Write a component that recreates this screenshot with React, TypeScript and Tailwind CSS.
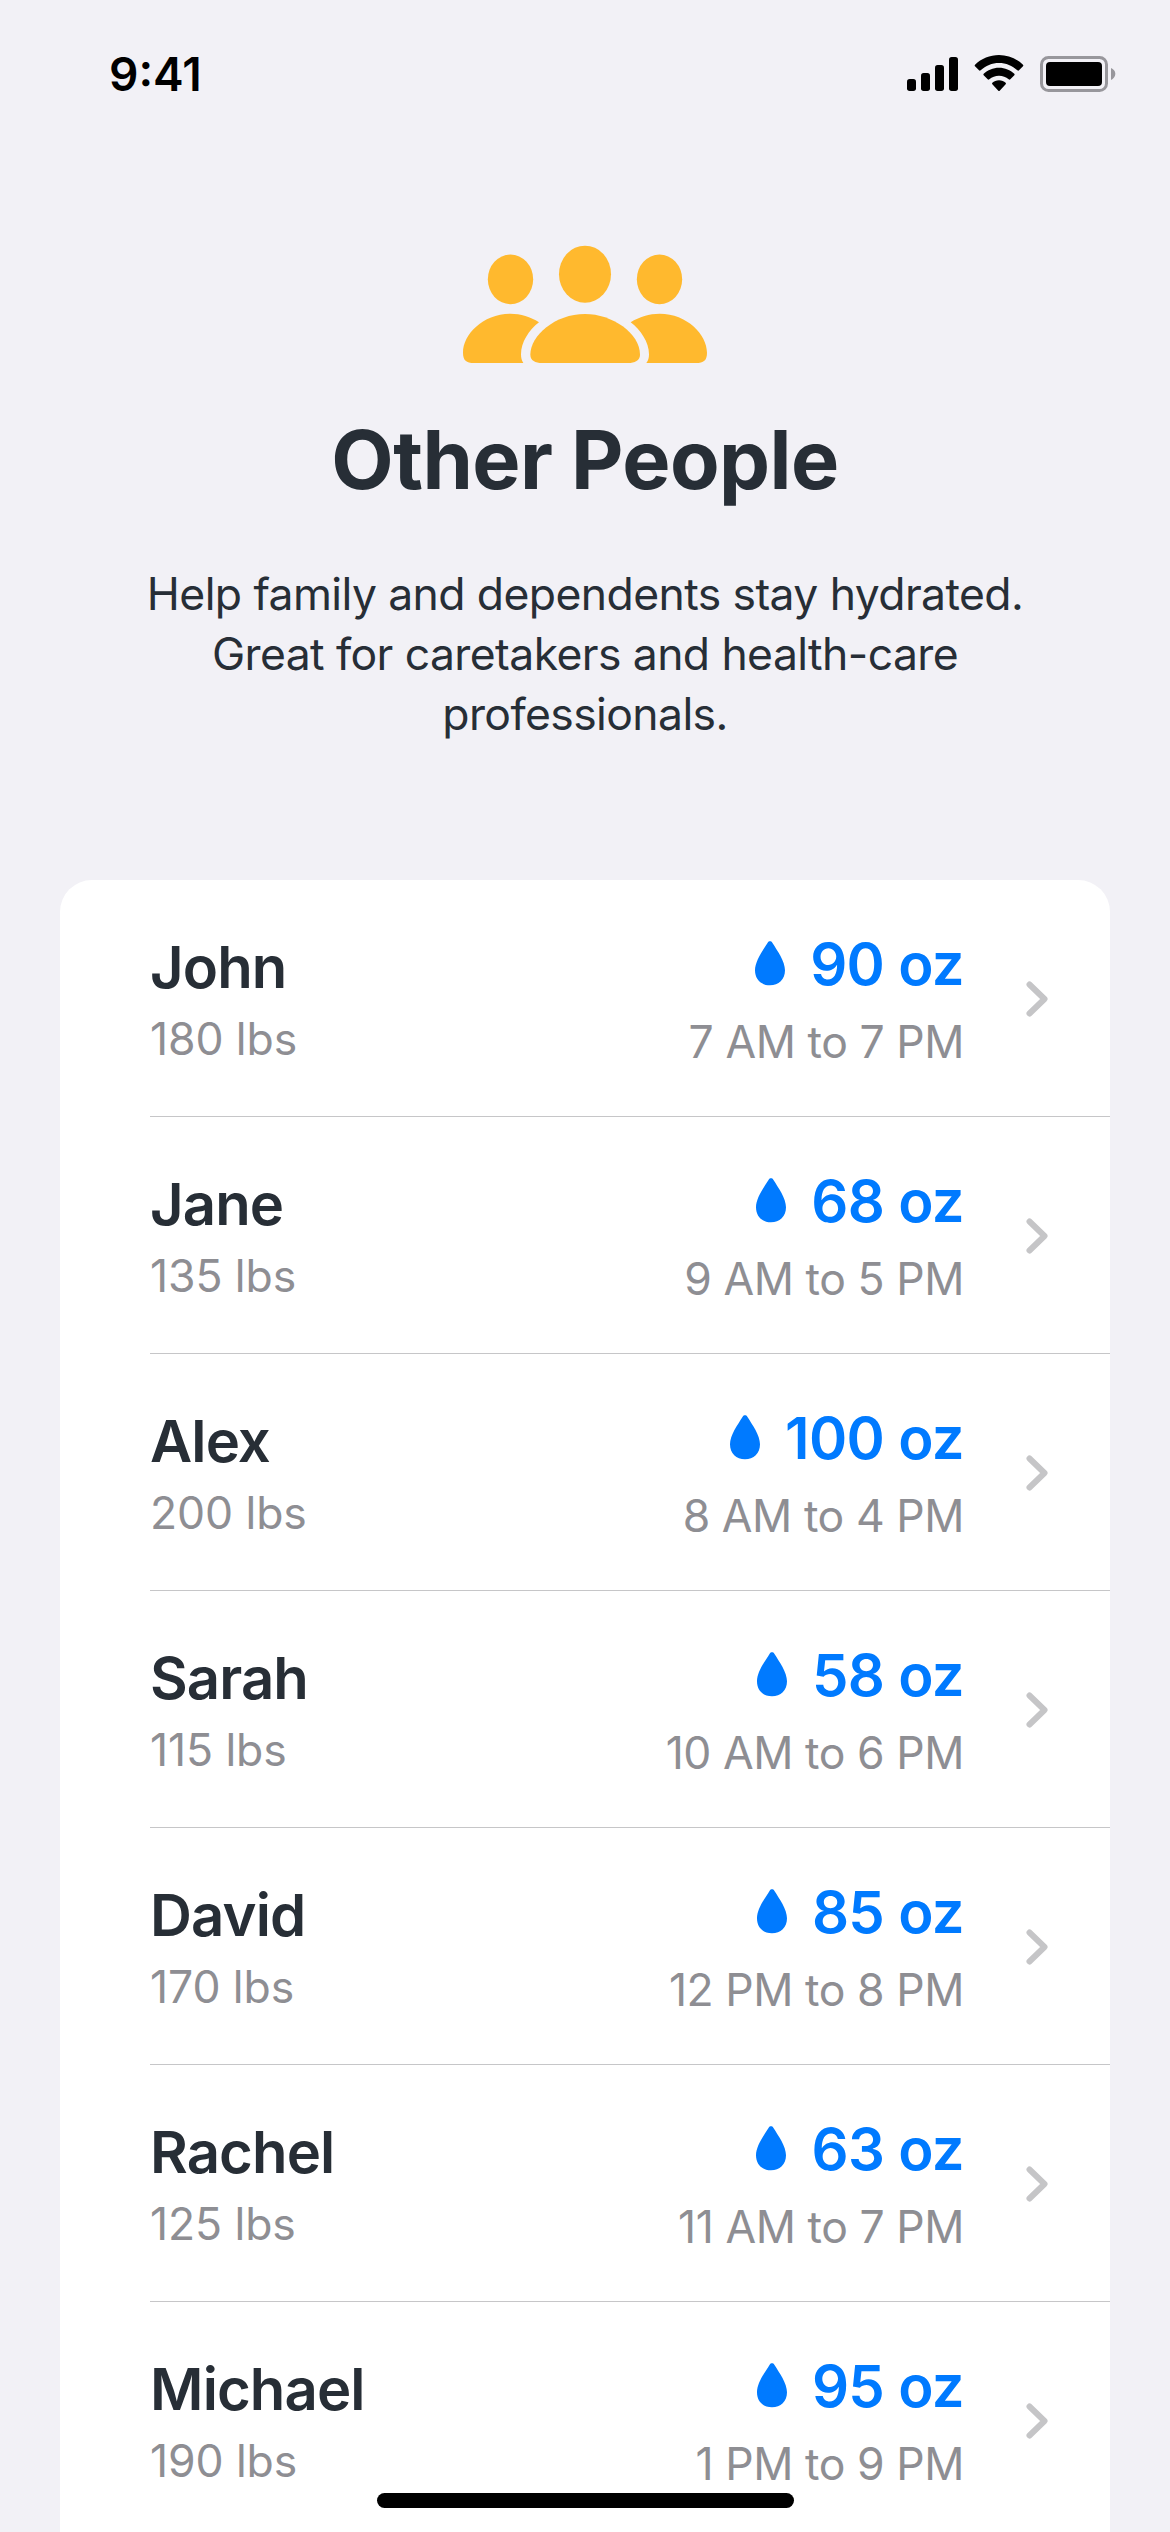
import React from 'react';

interface Person {
  name: string;
  weight: string;
  amount: string;
  hours: string;
}

const PEOPLE: Person[] = [
  { name: 'John', weight: '180 lbs', amount: '90 oz', hours: '7 AM to 7 PM' },
  { name: 'Jane', weight: '135 lbs', amount: '68 oz', hours: '9 AM to 5 PM' },
  { name: 'Alex', weight: '200 lbs', amount: '100 oz', hours: '8 AM to 4 PM' },
  { name: 'Sarah', weight: '115 lbs', amount: '58 oz', hours: '10 AM to 6 PM' },
  { name: 'David', weight: '170 lbs', amount: '85 oz', hours: '12 PM to 8 PM' },
  { name: 'Rachel', weight: '125 lbs', amount: '63 oz', hours: '11 AM to 7 PM' },
  { name: 'Michael', weight: '190 lbs', amount: '95 oz', hours: '1 PM to 9 PM' },
];

const PeopleIcon = () => (
  <svg className="h-[119px] w-[246px]" viewBox="66 45 738 357" fill="#ffb92e">
    <ellipse cx="435" cy="132.500" rx="78" ry="85.500" />
    <ellipse cx="211.500" cy="148" rx="68" ry="74.500" />
    <ellipse cx="658.500" cy="148" rx="68" ry="74.500" />
    <path d="M435 252C517 252 600 310 600 374C600 391 584 399 564 399H306C286 399 271 391 271 374C271 317 345 252 435 252Z" />
    <path d="M211 251.500C242 251.500 272 261 297 277C267 300 243 337 243 373C243 383 245 392 250 399H102C79 399 69 391 69 368C69 315 128 251.500 211 251.500Z" />
    <path d="M659 251.500C628 251.500 598 261 572 277C602 300 627 337 627 373C627 383 625 392 619 399H768C791 399 801 391 801 368C801 315 742 251.500 659 251.500Z" />
  </svg>
);

const SignalIcon = () => (
  <svg className="h-[39px] w-[51px]" viewBox="81 72 153 117">
    <rect x="81" y="147" width="27" height="36" rx="8" />
    <rect x="123" y="129" width="27" height="54" rx="8" />
    <rect x="165" y="105" width="27" height="78" rx="8" />
    <rect x="207" y="81" width="27" height="102" rx="8" />
  </svg>
);

const WifiIcon = () => (
  <svg className="ml-4 h-[39px] w-[50px]" viewBox="282 72 150 117">
    <path d="M357 75C384 75 410 86 429 104Q431 107 429 109L417 121Q415 123 412 121C397 107 378 99 357 99C336 99 317 107 302 121Q299 123 297 121L285 109Q283 107 285 104C304 86 330 75 357 75Z" />
    <path d="M357 113C375 113 391 120 403 131Q405 134 403 136L391 148Q389 150 386 148C378 141 368 137 357 137C346 137 336 141 328 148Q325 150 323 148L311 136Q309 134 311 131C323 120 339 113 357 113Z" />
    <path d="M357 151C365 151 372 154 377 158Q379 161 377 163L359 182Q357 184 355 182L337 163Q335 161 337 158C342 154 349 151 357 151Z" />
  </svg>
);

const BatteryIcon = () => (
  <svg className="ml-4 h-[39px] w-[76px]" viewBox="480 72 228 117">
    <rect x="484.500" y="82.500" width="195" height="99" rx="21" fill="none" stroke="#98979c" strokeWidth="9" />
    <rect x="498" y="96" width="168" height="72" rx="12" />
    <path d="M693 114C700 117 706 123 706 131.500C706 140 700 147 693 150Z" fill="#98979c" />
  </svg>
);

const DropIcon = () => (
  <svg className="mb-px h-[45px] w-[30px]" viewBox="0 0 90 135" fill="#007aff">
    <path d="M45 1C48 1 50 2 52 5C67 29 90 60 90 88C90 116 71 133 45 133C19 133 0 116 0 88C0 60 23 29 38 5C40 2 42 1 45 1Z" />
  </svg>
);

const ChevronIcon = () => (
  <svg className="h-9 w-[22px]" viewBox="0 0 22 36" fill="none" stroke="#c5c5c7" strokeWidth="6" strokeLinecap="round" strokeLinejoin="round">
    <path d="M3.500 3.500L18.500 18L3.500 32.500" />
  </svg>
);

const PersonRow: React.FC<{ person: Person }> = ({ person }) => (
  <li className="ml-[90px] flex h-[237px] shrink-0 border-b border-[#c6c6c8] pr-[62px]">
    <div className="flex-1 pt-[52px]">
      <div className="text-[58px] leading-[70px] font-semibold tracking-[-0.015em] text-[#272e36]">{person.name}</div>
      <div className="mt-[10px] text-[44.5px] leading-[54px] tracking-[-0.002em] text-[#8e8e93]">{person.weight}</div>
    </div>
    <div className="flex flex-col items-end pt-[49px]">
      <div className="flex h-[70px] items-center gap-[25px]">
        <DropIcon />
        <span className="text-[58px] leading-[70px] font-semibold tracking-[-0.011em] text-[#007aff]">{person.amount}</span>
      </div>
      <div className="mt-4 text-[44.5px] leading-[54px] tracking-[-0.01em] text-[#8e8e93]">{person.hours}</div>
    </div>
    <div className="ml-[62px] pt-[101px]">
      <ChevronIcon />
    </div>
  </li>
);

export default function App() {
  return (
    <div className="relative flex h-[2532px] w-[1170px] flex-col overflow-hidden bg-[#f2f1f6] font-['Inter','Liberation_Sans',sans-serif]">
      {/* Status bar */}
      <div className="flex h-[245px] shrink-0 items-start justify-between pl-[109px] pr-[54px]">
        <span className="pt-11 text-[46px] leading-[60px] font-semibold text-black">9:41</span>
        <div className="flex pt-[54px]">
          <SignalIcon />
          <WifiIcon />
          <BatteryIcon />
        </div>
      </div>

      <header className="flex h-[635px] shrink-0 flex-col items-center text-center text-[#272e36]">
        <PeopleIcon />
        <h1 className="mt-[46px] text-[81px] leading-[100px] font-bold tracking-[-0.007em]">Other People</h1>
        <p className="mt-[54px] text-[44.5px] leading-[60px] tracking-[-0.0135em]">
          Help family and dependents stay hydrated.
          <br />
          Great for caretakers and health-care
          <br />
          professionals.
        </p>
      </header>

      <ul className="mx-[60px] flex flex-1 flex-col overflow-hidden rounded-t-[32px] bg-white">
        {PEOPLE.map((person) => (
          <PersonRow key={person.name} person={person} />
        ))}
      </ul>

      {/* Home indicator */}
      <div className="absolute bottom-6 left-[377px] h-[15px] w-[417px] rounded-full bg-black"></div>
    </div>
  );
}
